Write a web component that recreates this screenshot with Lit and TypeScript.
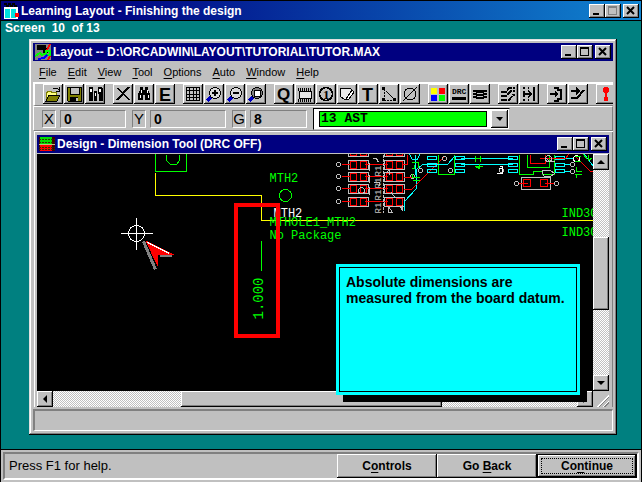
import { LitElement, html, svg, css, nothing, TemplateResult, SVGTemplateResult } from "lit";
import { customElement, property } from "lit/decorators.js";

const icons: Record<string, SVGTemplateResult> = {
  open: svg`<path d="M3 17V8h1V7h4v1h5v3" fill="#ffff80" stroke="#808000"/><path d="M3 17l3-6h11l-3 6z" fill="#808000" stroke="#000"/><path d="M10 5l1-1h3l2 2M16 3v4h-3" fill="none" stroke="#000"/>`,
  save: svg`<path d="M3 3h14v14H4l-1-1z" fill="#808000" stroke="#000"/><path d="M6 3h9v7H6z" fill="#c0c0c0" stroke="#000"/><path d="M6 13h8v4H6z" fill="#000"/><path d="M12 14h2v3h-2z" fill="#c0c0c0"/>`,
  library: svg`<path d="M4 3h4v14H4zM9 7h3v10H9zM13 3h3l2 2v12h-4z" fill="#000"/><path d="M5 5h2v3H5zM10 9h1v3h-1zM14 5h2v3h-2z" fill="#fff"/>`,
  cut: svg`<path d="M3 4h3l11 12h-2z" fill="#000"/><path d="M16 3L4 16" stroke="#000" stroke-width="2"/>`,
  find: svg`<path d="M6 3h3v3h2V3h3v3l2 4v6h-5v-5H9v5H4v-6l2-4z" fill="#000"/><path d="M7 6v3M6 11v3M13 6v3M14 11v3" stroke="#fff"/>`,
  edit: svg`<text x="4" y="17" font-size="18" class="t">E</text>`,
  grid: svg`<path d="M3.5 3.5h13v13h-13zM3.5 6.5h13M3.5 10h13M3.5 13.5h13M6.5 3.5v13M10 3.5v13M13.5 3.5v13" fill="none" stroke="#000"/>`,
  zoomIn: svg`<path d="M3 17l4-4" stroke="#0000c0" stroke-width="3"/><circle cx="11" cy="9" r="5.5" fill="#d8d8d8" stroke="#000"/><path d="M8 9h6M11 6v6" stroke="#000" stroke-width="2"/>`,
  zoomOut: svg`<path d="M3 17l4-4" stroke="#0000c0" stroke-width="3"/><circle cx="11" cy="9" r="5.5" fill="#d8d8d8" stroke="#000"/><path d="M8 9h6" stroke="#000" stroke-width="2"/>`,
  zoomAll: svg`<path d="M3 17l4-4" stroke="#0000c0" stroke-width="3"/><circle cx="11" cy="9" r="5.5" fill="#808080" stroke="#000"/><path d="M8 6h6v6H8z" fill="#fff" stroke="#000"/>`,
  query: svg`<text x="3" y="16" font-size="17" class="t">Q</text>`,
  component: svg`<path d="M4 7h12v7H4z" fill="#e8e8e8" stroke="#000"/><path d="M3 5h14M3 16h14" stroke="#000" stroke-width="3" stroke-dasharray="1 1"/>`,
  pin: svg`<circle cx="10" cy="10" r="6.5" fill="none" stroke="#000" stroke-width="1.5"/><text x="7" y="15" font-size="13" class="t s">1</text>`,
  obstacle: svg`<path d="M3.5 4.5h10l2 2-5 6v3h-3l-4-3z" fill="#e8e8e8" stroke="#000"/><path d="M9 15l6-9 2 2-5 7z" fill="#fff" stroke="#000"/>`,
  text: svg`<text x="4" y="17" font-size="18" class="t">T</text>`,
  connection: svg`<path d="M5 5v11M5 5l11 11M5 16h11" fill="none" stroke="#000" stroke-dasharray="2 1"/><path d="M3 3h3v3H3zM3 14h3v3H3zM14 14h3v3h-3z" fill="#000"/>`,
  error: svg`<circle cx="10" cy="10" r="6" fill="none" stroke="#000"/><path d="M3 17L17 3" stroke="#000"/>`,
  color: svg`<path d="M3 4h6v6H3z" fill="#ff0"/><path d="M11 4h6v6h-6z" fill="red"/><path d="M3 11h6v6H3z" fill="#00f"/><path d="M11 11h6v6h-6z" fill="#0f0"/>`,
  drc: svg`<text x="3" y="10" font-size="8" class="t m">DRC</text><path d="M3 13h14v3H3z" fill="#000"/>`,
  reconnect: svg`<path d="M6 6h8v9H6z" fill="#000"/><path d="M3 7h14M3 10h14M3 13h14" stroke="#000" stroke-width="2"/><path d="M7 9h6M7 12h6" stroke="#c0c0c0"/>`,
  autoPath: svg`<path d="M3 8h5l3-4h6M3 12h5l5-5h4M3 16h8l4-5h2" fill="none" stroke="#000" stroke-width="2" stroke-dasharray="6 1"/>`,
  shove: svg`<path d="M5 3v14" stroke="#000" stroke-width="2" stroke-dasharray="2 2"/><path d="M9 3v14" stroke="#000" stroke-dasharray="2 1"/><path d="M4 10h9" stroke="#000" stroke-width="2"/><path d="M10 7l4 3-4 3z" fill="#000"/><path d="M15 3v14" stroke="#000" stroke-width="2"/>`,
  editSeg: svg`<path d="M7 4h4v2h3v9h-3v2H7" fill="none" stroke="#000" stroke-width="2"/><path d="M3 10h7" stroke="#000" stroke-width="2"/><path d="M8 7l4 3-4 3z" fill="#000"/>`,
  addRoute: svg`<path d="M3 7h7M3 14h6l7-8" fill="none" stroke="#000" stroke-width="2"/><path d="M8 3l5 4-5 4z" fill="#000"/>`,
  online: svg`<path d="M10 3v14" stroke="red" stroke-width="2"/><circle cx="10" cy="6" r="3" fill="red"/><circle cx="10" cy="15" r="2.5" fill="red"/>`,
};

const toolGroups: [string, string][][] = [
  [["open", "Open"], ["save", "Save"], ["library", "Library Manager"]],
  [["cut", "Delete"], ["find", "Find"], ["edit", "Edit"]],
  [["grid", "Spreadsheet"], ["zoomIn", "Zoom In"], ["zoomOut", "Zoom Out"], ["zoomAll", "Zoom All"]],
  [["query", "Query"], ["component", "Component Tool"], ["pin", "Pin Tool"], ["obstacle", "Obstacle Tool"], ["text", "Text Tool"], ["connection", "Connection Tool"], ["error", "Error Tool"]],
  [["color", "Color Settings"], ["drc", "Online DRC"], ["reconnect", "Reconnect"]],
  [["autoPath", "Auto Path"], ["shove", "Shove Track"]],
  [["editSeg", "Edit Segment"], ["addRoute", "Add Route"]],
  [["online", "Design Rule Check"]],
];

const menus = ["File", "Edit", "View", "Tool", "Options", "Auto", "Window", "Help"];

const shared = css`
  * { box-sizing: border-box; }
  button, input, select { font: inherit; color: inherit; margin: 0; padding: 0; border: 0; border-radius: 0; }
  svg { display: block; }
  .raised {
    background: #c0c0c0;
    box-shadow: inset -1px -1px #000, inset 1px 1px #fff, inset -2px -2px #808080;
  }
`;

@customElement("window-title")
export class WindowTitle extends LitElement {
  @property() caption = "";
  @property() glyph = "";
  @property({ type: Boolean, reflect: true }) gradient = false;
  static styles = [shared, css`
    :host {
      display: flex; align-items: center; height: 18px; padding: 0 2px; gap: 2px;
      background: #000080; color: #fff; font: bold 12px/18px "Liberation Sans", Arial, sans-serif;
    }
    :host([gradient]) { height: 19px; background: linear-gradient(90deg, #000080, #000080 15%, #1084d0); }
    .caption { flex: 1; white-space: nowrap; overflow: hidden; }
    .buttons { display: flex; }
    .box { width: 16px; height: 14px; }
    .close { margin-left: 2px; }
  `];
  private icon() {
    if (this.glyph === "book") return svg`<path d="M1 4h14v12H1z" fill="#fff"/><path d="M2 6h5v9H2zM8 6h5v9H8z" fill="#00e0e0"/><path d="M1 1h12M3 3h12" stroke="#000" stroke-width="2" stroke-dasharray="3 1"/><circle cx="14" cy="12" r="2.5" fill="red"/>`;
    if (this.glyph === "layout") return svg`<path d="M0 0h16v16H0z" fill="#808080"/><path d="M2 1h9v3h2v5H8V6H2z" fill="#000"/><path d="M0 12l5-3 2 2 5-2" fill="none" stroke="#0f0" stroke-width="2"/><circle cx="13" cy="9" r="2.5" fill="none" stroke="#0f0" stroke-width="2"/><path d="M15 0l-3 6M15 12l-2 4" stroke="red" stroke-width="2"/><path d="M3 15l6-1 3-3" fill="none" stroke="#00f" stroke-width="2"/>`;
    return svg`<path d="M0 1h16v14H0z" fill="#400"/><path d="M1 1h12v7H1z" fill="#0d0"/><path d="M1 9h12v6H1z" fill="#f00"/><path d="M0 3h16M0 6h16M0 11h16M0 13h16" stroke="#303000" stroke-dasharray="2 1"/><path d="M0 8.500h16" stroke="#c0c080"/>`;
  }
  render(): TemplateResult {
    const max = this.gradient ? "#808080" : "#000";
    return html`
      <svg width="16" height="16" shape-rendering="crispEdges" aria-hidden="true">${this.icon()}</svg>
      <span class="caption">${this.caption}</span>
      <span class="buttons">
        <button class="box raised" aria-label="Minimize"><svg width="16" height="14"><path d="M4 9h6v2H4z"/></svg></button>
        <button class="box raised" aria-label="Maximize"><svg width="16" height="14" shape-rendering="crispEdges"><path d="M3 2h9v9H3zM4 4v6h7V4z" fill=${max} fill-rule="evenodd"/></svg></button>
        <button class="box close raised" aria-label="Close"><svg width="16" height="14"><path d="M4 3l7 7M11 3l-7 7" stroke="#000" stroke-width="2"/></svg></button>
      </span>`;
  }
}

@customElement("scroll-bar")
export class ScrollBar extends LitElement {
  @property({ type: Boolean, reflect: true }) vertical = false;
  @property({ type: Array }) split = [1, 1, 1];
  static styles = [shared, css`
    :host { display: flex; background: repeating-conic-gradient(#fff 0 25%, #c0c0c0 0 50%) 0 0 / 2px 2px; height: 16px; }
    :host([vertical]) { flex-direction: column; width: 16px; height: auto; }
    button { flex: none; width: 16px; height: 16px; }
  `];
  render() {
    const [a, b, c] = this.split;
    return html`
      <button class="raised" aria-label="Back"><svg width="16" height="16"><path d=${this.vertical ? "M4 10h8l-4-4z" : "M10 4v8l-4-4z"}/></svg></button>
      <div style="flex:${a} 1 0"></div><div class="raised" style="flex:${b} 1 0"></div><div style="flex:${c} 1 0"></div>
      <button class="raised" aria-label="Forward"><svg width="16" height="16"><path d=${this.vertical ? "M4 6h8l-4 4z" : "M6 4v8l4-4z"}/></svg></button>`;
  }
}

@customElement("board-view")
export class BoardView extends LitElement {
  static styles = css`
    :host { display: block; background: #000; overflow: hidden; }
    svg { display: block; width: 100%; height: 100%; }
    text { font: 12px "Liberation Mono", monospace; fill: #0f0; }
    .white { fill: #fff; }
    .dim { font-size: 14px; }
    .ref { fill: #c0c0c0; font-size: 9px; }
    .g { stroke: #0f0; }
    .y { stroke: #ff0; }
    .r { stroke: #f00; }
    .c { stroke: #0ff; }
    .s { stroke: #c0c0c0; }
    .w { stroke: #fff; }
  `;
  render() {
    const rows = [152, 165, 177, 189, 202];
    const pads = (x: number) => rows.map((y) => svg`
      <path class="s" d="M${x} ${y - 5}h20v9h-20z"/>
      <path class="r" d="M${x + 2} ${y - 4}h6v7h-6zM${x + 12} ${y - 4}h6v7h-6z"/>`);
    return html`<svg shape-rendering="crispEdges" role="img" aria-label="Board layout">
      <g transform="translate(-36.5 -153.5)" fill="none">
        <path class="g" d="M155 150v21h31v-21"/>
        <path class="g" d="M166 154v6l4 4h6l3-4v-6"/>
        <path class="y" d="M155 172v23h106v25h333"/>
        <circle class="g" cx="285" cy="195" r="6"/>
        <path class="g" d="M261 240v30"/>
        <text x="269" y="181">MTH2</text>
        <text x="273" y="216" class="white">MTH2</text>
        <text x="269" y="225">MTHOLE1_MTH2</text>
        <text x="269" y="238">No Package</text>
        <text x="561" y="216">IND3C</text>
        <text x="561" y="235">IND3C</text>
        <text class="dim" transform="translate(262 319) rotate(-90)">1.000</text>
        ${pads(348)}${pads(384)}
        ${rows.slice(1).map((y) => svg`<circle class="s" cx="338" cy="${y - 1}" r="2"/><path class="r" d="M341 ${y - 1}h9M364 ${y - 1}h23"/>
          <text class="ref" transform="translate(380 ${y + 11}) rotate(-90)">R1</text>`)}
        <path class="s" stroke-dasharray="3 1" d="M383 154v58"/>
        <path class="s" d="M372 158h4l2 4M373 182h6v3M386 172l3-3v5M388 206l4 6h-4zM391 192l4 6M400 206l2 4v-6M369 162v8M369 174v8M369 186v8"/>
        <circle class="s" cx="361" cy="190" r="3"/><circle class="s" cx="420" cy="170" r="2"/><circle class="s" cx="412" cy="176" r="2"/>
        <path class="c" d="M404 210v-9l12-13v-19l6-5h18M415 154v20M409 154l3 5h5l2-5"/>
        <path class="r" d="M401 164h6v-10M403 177h9M403 189h8l33-33"/>
        <path class="g" d="M411 162h6M411 168h3v-4M418 161v6M412 173v4h7M412 180h7"/>
        <path class="g" d="M438 154v20h16v-20"/>
        <path class="c" d="M427 156h9v3h-9zM427 163h9v3h-9zM427 169h9v3h-9zM455 156h9v3h-9zM455 163h9v3h-9zM455 169h9v3h-9zM508 156h9v3h-9zM508 163h9v3h-9zM508 169h9v3h-9zM555 156h9v3h-9zM555 163h9v3h-9zM555 169h9v3h-9z"/>
        <path class="c" d="M460 158h52M422 164h25l7-8M460 164h52M564 158h8M564 164h6M564 171h6M584 154l9 12"/>
        <path class="g" d="M475 155v6M475 158h6M480 155v6M475 166h7M479 163v5l-4-2"/>
        <circle class="s" cx="444" cy="158" r="2"/><circle class="s" cx="450" cy="170" r="2"/><circle class="s" cx="501" cy="170" r="2"/>
        <path class="w" d="M496 173h6v-7h-3M498 168h3"/>
        <path class="g" d="M519 154v20h14v-3h9v3h12v-20M527 154v13h22v-13"/>
        <path class="r" d="M530 154v9h15v-9M539 158h26l3-4M576 157l14 14h3"/>
        <path class="s" d="M542 170h8l4 3-4 3h-6l-2-3zM546 158l3 3h5"/>
        <circle class="s" cx="548" cy="158" r="3"/><circle class="s" cx="572" cy="164" r="2"/><circle class="s" cx="572" cy="171" r="2"/><circle class="w" cx="576" cy="158" r="3"/>
        <path class="g" d="M574 156h6M574 161h6M576 166v5h5M574 174h7M576 173v4M583 154l4 5M588 154v6l4-3"/>
        <path class="s" d="M521 177h29v12h-29z"/>
        <path class="r" d="M523 179h7v7h-7zM540 179h7v7h-7zM518 183h9M544 183h10"/>
        <circle class="s" cx="516" cy="183" r="2"/><circle class="s" cx="556" cy="183" r="2"/>
        <path stroke="red" stroke-width="4" d="M235.500 204.500h42v131h-42z"/>
        <circle class="w" cx="136" cy="233" r="8"/>
        <path class="w" d="M120 233h32M136 217v32"/>
        <path stroke="#808080" stroke-width="3" d="M143 241l12 28M159 255h12"/>
        <path fill="red" d="M145 240l28 14h-15l-1 12z"/>
        <path class="w" d="M147 242l22 11"/>
      </g>
    </svg>`;
  }
}

@customElement("app-root")
export class AppRoot extends LitElement {
  static styles = [shared, css`
    :host {
      display: flex; flex-direction: column; min-height: 100vh; box-sizing: border-box;
      border: 1px solid #000; border-bottom: 0; background: #008080; overflow: hidden;
      font-family: "Liberation Sans", Arial, sans-serif; font-size: 12px; color: #000;
    }
    .screen { margin: 0; padding: 0 4px; font-size: 12px; font-weight: bold; line-height: 14px; height: 19px; color: #fff; border-top: 1px solid #000; white-space: pre; }
    .frame {
      flex: 1; display: flex; flex-direction: column; min-width: 0; margin: 0 24px 14px 28px; padding: 4px;
      background: #c0c0c0; box-shadow: inset -1px -1px #000, inset 1px 1px #dfdfdf, inset -2px -2px #808080, inset 2px 2px #fff;
    }
    .menu { display: flex; gap: 11px; height: 21px; padding: 0 6px; }
    .menu button { background: none; font-size: 11px; }
    .menu u, .actions u { text-underline-offset: 2px; }
    .tools { display: flex; gap: 8px; height: 24px; padding-left: 8px; border: solid #fff; border-width: 2px 0 0 2px; border-bottom: 1px solid #808080; overflow: hidden; }
    .group { display: flex; flex: none; gap: 1px; }
    .tool { width: 20px; height: 20px; }
    .t { font-family: "Liberation Sans", sans-serif; font-weight: bold; }
    .s { font-family: "Liberation Serif", serif; }
    .m { font-family: "Liberation Mono", monospace; }
    .coords { display: flex; align-items: center; height: 25px; padding: 0 8px; border: solid #fff; border-width: 1px 0 0 1px; border-bottom: 1px solid #808080; border-right: 1px solid #808080; font-size: 15px; }
    .coords label { width: 14px; height: 18px; line-height: 16px; text-align: center; }
    .sunk { border: 1px solid; border-color: #808080 #fff #fff #808080; }
    .coords input { height: 18px; margin: 0 6px 0 4px; padding: 0 3px; background: none; font: bold 14px "Liberation Sans", sans-serif; }
    .x { width: 66px; }
    .y { width: 76px; }
    .g { width: 57px; }
    .layer { display: flex; align-items: center; gap: 4px; width: 197px; height: 22px; padding: 1px 1px 1px 5px; background: #fff; border: 1px solid; border-color: #000 #c0c0c0 #c0c0c0 #000; }
    .layer select { flex: 1; height: 16px; min-width: 0; appearance: none; background: #0f0; border: 1px solid #000; font: bold 13px/14px "Liberation Mono", monospace; padding: 0 1px; }
    .layer button { width: 17px; height: 18px; }
    .child { flex: 1; display: flex; flex-direction: column; margin-left: 1px; padding: 3px 4px 0 3px; box-shadow: inset 1px 1px #fff, inset -1px 0 #808080; }
    .child window-title { margin-top: 1px; }
    .view { flex: 1; display: grid; grid-template: minmax(0, 1fr) 16px / minmax(0, 1fr) 16px; margin-top: 1px; position: relative; }
    .grip { width: 16px; height: 16px; background: repeating-linear-gradient(135deg, #c0c0c0 0 2px, #fff 2px 3px, #808080 3px 4px); clip-path: polygon(100% 20%, 100% 100%, 20% 100%); }
    .note {
      position: absolute; right: 29px; bottom: 12px; width: 244px; height: 131px; padding: 3px;
      background: #0ff; box-shadow: 7px 7px #000;
    }
    .note p { margin: 0; height: 100%; padding: 6px; border: 1px solid #000; font-weight: bold; font-size: 14px; line-height: 16px; white-space: pre-line; }
    .state { height: 22px; margin-top: 2px; border: solid; border-width: 2px 1px 1px 2px; border-color: #808080 #fff #fff #808080; }
    .footer { display: flex; height: 33px; padding: 2px 2px 2px 2px; background: #c0c0c0; border-top: 1px solid #000; }
    .footbox { flex: 1; display: flex; justify-content: space-between; padding-left: 4px; border: 2px solid; border-color: #808080 #fff #fff #808080; }
    .hint { font-size: 13px; line-height: 24px; }
    .actions { display: flex; font-weight: bold; }
    .actions button { width: 100px; height: 24px; }
    .actions .default { border: 1px solid #000; outline: 1px dotted #000; outline-offset: -5px; }
  `];
  private accel(label: string, at = 0) {
    return html`${label.slice(0, at)}<u>${label[at]}</u>${label.slice(at + 1)}`;
  }
  private coord(name: string, cls: string, value: string) {
    return html`<label class="sunk" for=${cls}>${name}</label><input class="sunk ${cls}" id=${cls} .value=${value}>`;
  }
  render() {
    return html`
      <window-title gradient glyph="book" caption="Learning Layout - Finishing the design"></window-title>
      <h1 class="screen">Screen  10  of 13</h1>
      <main class="frame">
        <window-title glyph="layout" caption="Layout -- D:\\ORCADWIN\\LAYOUT\\TUTORIAL\\TUTOR.MAX"></window-title>
        <nav class="menu">${menus.map((m) => html`<button>${this.accel(m)}</button>`)}</nav>
        <div class="tools">${toolGroups.map((g) => html`<div class="group">${g.map(([id, name]) => html`
          <button class="tool raised" aria-label=${name}><svg width="20" height="20" shape-rendering="crispEdges">${icons[id] ?? nothing}</svg></button>`)}</div>`)}</div>
        <div class="coords">
          ${this.coord("X", "x", "0")}${this.coord("Y", "y", "0")}${this.coord("G", "g", "8")}
          <div class="layer">
            <select aria-label="Layer"><option>13 AST</option></select>
            <button class="raised" aria-label="Show layers"><svg width="17" height="18"><path d="M5 7h7l-3 4z"/></svg></button>
          </div>
        </div>
        <section class="child">
          <window-title glyph="design" caption="Design - Dimension Tool (DRC OFF)"></window-title>
          <div class="view">
            <board-view></board-view>
            <scroll-bar vertical .split=${[67, 73, 65]}></scroll-bar>
            <scroll-bar .split=${[128, 261, 135]}></scroll-bar>
            <div class="grip"></div>
            <aside class="note"><p>Absolute dimensions are
measured from the board datum.</p></aside>
          </div>
        </section>
        <div class="state"></div>
      </main>
      <footer class="footer">
        <div class="footbox">
          <span class="hint">Press F1 for help.</span>
          <div class="actions">
            <button class="raised">${this.accel("Controls", 1)}</button>
            <button class="raised">${this.accel("Go Back", 3)}</button>
            <button class="raised default">${this.accel("Continue", 2)}</button>
          </div>
        </div>
      </footer>`;
  }
}
